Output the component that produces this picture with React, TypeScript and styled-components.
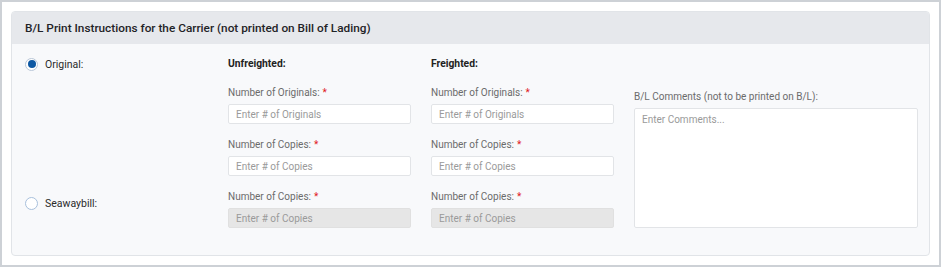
import styled, { createGlobalStyle } from "styled-components";

const GlobalStyle = createGlobalStyle`
  body {
    margin: 0;
    background: #fff;
    font-family: Roboto, "Liberation Sans", Arial, sans-serif;
  }
  * {
    box-sizing: border-box;
  }
`;

const Frame = styled.div`
  width: 941px;
  height: 267px;
  border: 2px solid #cdd1d6;
  padding: 9px 9px 0 9px;
  background: #fff;
`;

const Card = styled.section`
  width: 919px;
  height: 245px;
  border: 1px solid #e1e4e8;
  border-radius: 4px;
  background: #f8f9fb;
  overflow: hidden;
`;

const CardHeader = styled.header`
  height: 32px;
  background: #e6e8ec;
  display: flex;
  align-items: center;
  padding-left: 13px;
  font-size: 11.8px;
  font-weight: 500;
  color: #1f2327;
`;

const Body = styled.div`
  display: grid;
  grid-template-columns: 183px 183px 183px 284px;
  column-gap: 20px;
  padding: 12px 10px 26px 13px;
`;

const RadioColumn = styled.div`
  display: flex;
  flex-direction: column;
  justify-content: space-between;
  padding-bottom: 17px;
`;

const RadioRow = styled.label`
  display: flex;
  align-items: center;
  gap: 7px;
  height: 16px;
  font-size: 10.5px;
  color: #2a2a2a;
  cursor: pointer;
`;

const RadioDot = styled.span<{ $checked?: boolean }>`
  width: 13px;
  height: 13px;
  border-radius: 50%;
  border: 1px solid ${(p) => (p.$checked ? "#b9c7d8" : "#a8c0dc")};
  background: #fff;
  display: flex;
  align-items: center;
  justify-content: center;

  &::after {
    content: "";
    width: 8px;
    height: 8px;
    border-radius: 50%;
    background: ${(p) => (p.$checked ? "#0d58a3" : "transparent")};
  }
`;

const Column = styled.div<{ $end?: boolean }>`
  display: flex;
  flex-direction: column;
  gap: 13px;
  justify-content: ${(p) => (p.$end ? "flex-end" : "flex-start")};
`;

const Heading = styled.div`
  height: 16px;
  line-height: 16px;
  font-size: 10.3px;
  font-weight: 700;
  color: #222;
`;

const Field = styled.div`
  display: flex;
  flex-direction: column;
  gap: 3px;
`;

const Label = styled.div`
  height: 16px;
  line-height: 16px;
  font-size: 10px;
  color: #6b6b6b;
`;

const Required = styled.span`
  color: #e0201b;
  margin-left: 3px;
`;

const Input = styled.input`
  width: 100%;
  height: 20px;
  border: 1px solid #e2e4e7;
  border-radius: 2px;
  padding: 0 7px;
  font-family: inherit;
  font-size: 10px;
  color: #333;
  background: #fff;
  outline: none;

  &::placeholder {
    color: #9a9a9a;
  }

  &:disabled {
    background: #e6e6e6;
    border-color: #e0e0e0;
  }
`;

const TextArea = styled.textarea`
  width: 100%;
  height: 120px;
  border: 1px solid #e2e4e7;
  border-radius: 2px;
  padding: 5px 7px;
  font-family: inherit;
  font-size: 10px;
  resize: none;
  background: #fff;
  outline: none;

  &::placeholder {
    color: #9a9a9a;
  }
`;

function NumberField({
  label,
  placeholder,
  disabled,
}: {
  label: string;
  placeholder: string;
  disabled?: boolean;
}) {
  return (
    <Field>
      <Label>
        {label}
        <Required>*</Required>
      </Label>
      <Input placeholder={placeholder} disabled={disabled} />
    </Field>
  );
}

export default function App() {
  return (
    <>
      <GlobalStyle />
      <Frame>
        <Card>
          <CardHeader>
            B/L Print Instructions for the Carrier (not printed on Bill of Lading)
          </CardHeader>
          <Body>
            <RadioColumn>
              <RadioRow>
                <RadioDot $checked />
                Original:
              </RadioRow>
              <RadioRow>
                <RadioDot />
                Seawaybill:
              </RadioRow>
            </RadioColumn>
            <Column>
              <Heading>Unfreighted:</Heading>
              <NumberField label="Number of Originals:" placeholder="Enter # of Originals" />
              <NumberField label="Number of Copies:" placeholder="Enter # of Copies" />
              <NumberField label="Number of Copies:" placeholder="Enter # of Copies" disabled />
            </Column>
            <Column>
              <Heading>Freighted:</Heading>
              <NumberField label="Number of Originals:" placeholder="Enter # of Originals" />
              <NumberField label="Number of Copies:" placeholder="Enter # of Copies" />
              <NumberField label="Number of Copies:" placeholder="Enter # of Copies" disabled />
            </Column>
            <Column $end>
              <Field>
                <Label>B/L Comments (not to be printed on B/L):</Label>
                <TextArea placeholder="Enter Comments..." />
              </Field>
            </Column>
          </Body>
        </Card>
      </Frame>
    </>
  );
}
